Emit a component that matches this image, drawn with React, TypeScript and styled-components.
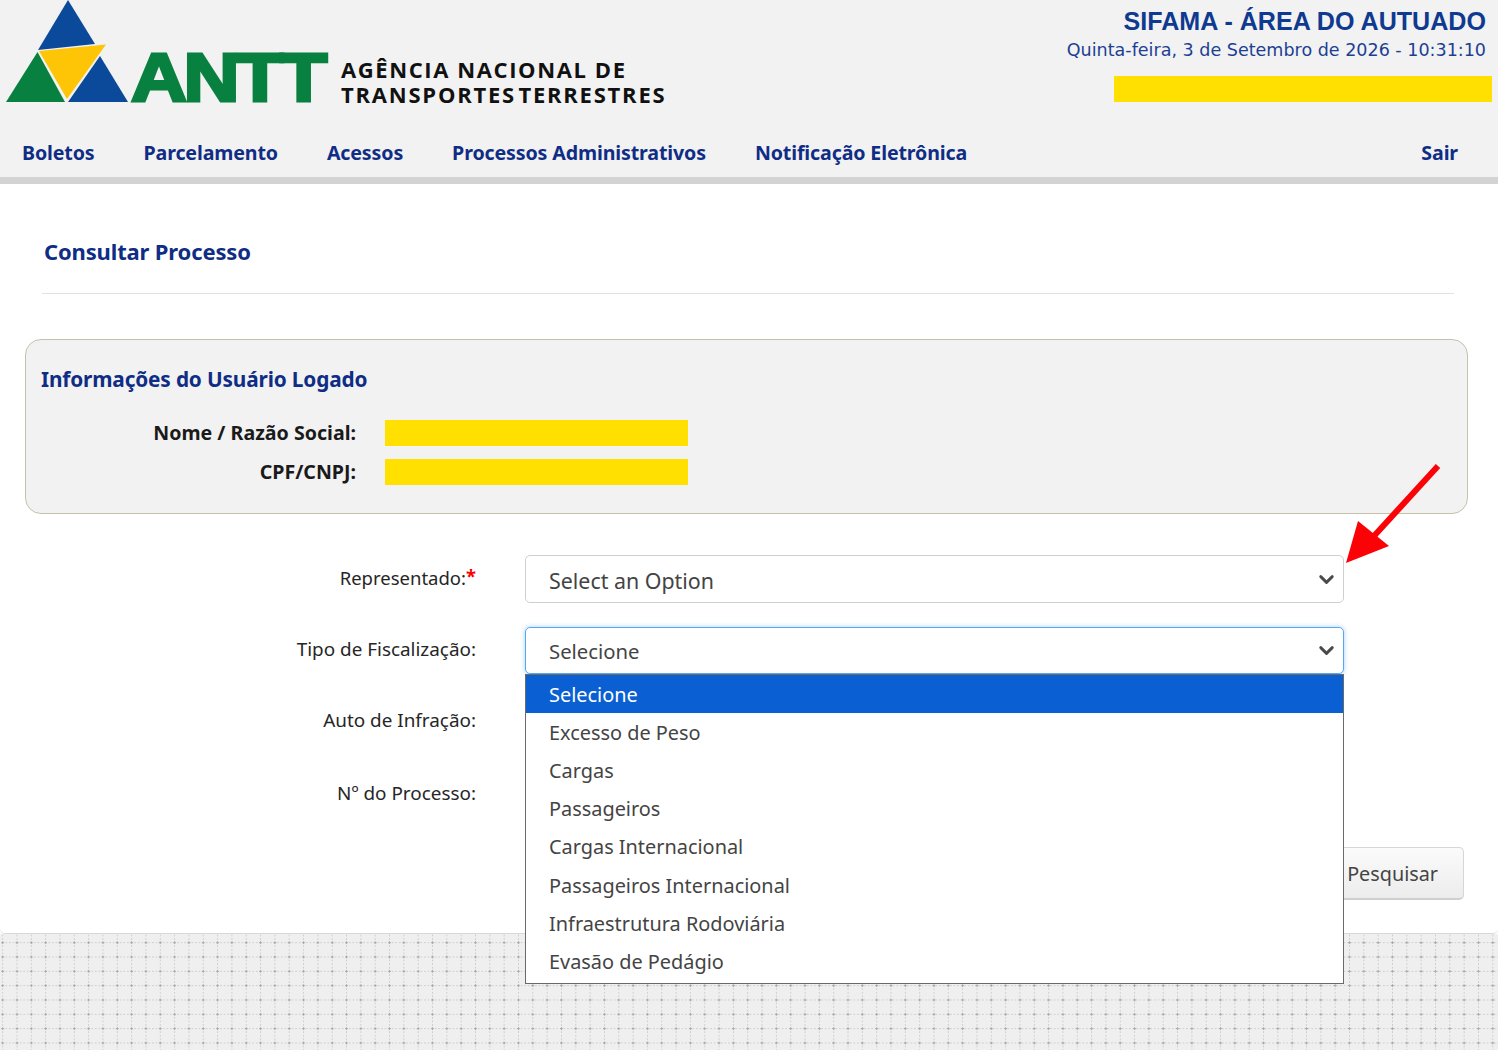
import React from "react";
import styled, { createGlobalStyle } from "styled-components";
import { ChevronDown } from "lucide-react";

const navItems = ["Boletos", "Parcelamento", "Acessos", "Processos Administrativos", "Notificação Eletrônica"];
const options = [
  "Selecione",
  "Excesso de Peso",
  "Cargas",
  "Passageiros",
  "Cargas Internacional",
  "Passageiros Internacional",
  "Infraestrutura Rodoviária",
  "Evasão de Pedágio",
];

const App = () => {
  return (
    <Page>
      <GlobalStyle />
      <Header>
        <TopRow>
          <Brand>
            <Logo />
            <BrandName>
              <BrandLine>AGÊNCIA NACIONAL DE</BrandLine>
              <BrandLine $tight>TRANSPORTES TERRESTRES</BrandLine>
            </BrandName>
          </Brand>
          <SystemInfo>
            <SystemTitle>SIFAMA - ÁREA DO AUTUADO</SystemTitle>
            <SystemDate>Quinta-feira, 3 de Setembro de 2026 - 10:31:10</SystemDate>
            <UserMask />
          </SystemInfo>
        </TopRow>
        <Nav>
          <NavList>
            {navItems.map((item) => (
              <NavLink key={item}>{item}</NavLink>
            ))}
          </NavList>
          <NavLink>Sair</NavLink>
        </Nav>
      </Header>
      <HeaderBar />

      <Content>
        <PageTitle>Consultar Processo</PageTitle>
        <Divider />

        <UserCard>
          <CardTitle>Informações do Usuário Logado</CardTitle>
          <InfoRow>
            <InfoLabel>Nome / Razão Social:</InfoLabel>
            <InfoMask />
          </InfoRow>
          <InfoRow>
            <InfoLabel>CPF/CNPJ:</InfoLabel>
            <InfoMask />
          </InfoRow>
          <Arrow />
        </UserCard>

        <Form>
          <FormRow>
            <FieldLabel $offset={-2} $size={18.5}>
              Representado:<Required>*</Required>
            </FieldLabel>
            <SelectBox>
              <SelectText>Select an Option</SelectText>
              <Chevron size={23} strokeWidth={3} />
            </SelectBox>
          </FormRow>
          <FormRow>
            <FieldLabel $offset={-2}>Tipo de Fiscalização:</FieldLabel>
            <SelectWrap>
              <SelectBox $open>
                <OpenText>Selecione</OpenText>
                <Chevron size={23} strokeWidth={3} />
              </SelectBox>
              <OptionList>
                {options.map((option, i) => (
                  <Option key={option} $active={i === 0}>
                    {option}
                  </Option>
                ))}
              </OptionList>
            </SelectWrap>
          </FormRow>
          <FormRow>
            <FieldLabel $offset={-3}>Auto de Infração:</FieldLabel>
            <HiddenInput />
          </FormRow>
          <FormRow>
            <FieldLabel $offset={-2}>Nº do Processo:</FieldLabel>
            <HiddenInput />
          </FormRow>
          <Actions>
            <SearchButton>Pesquisar</SearchButton>
          </Actions>
        </Form>
      </Content>

      <Footer />
    </Page>
  );
};

const Logo = () => (
  <svg width="335" height="118" viewBox="0 0 335 118" style={{ display: "block", flexShrink: 0 }}>
    <polygon points="68,0 95,44 38,50" fill="#0b4a9b" />
    <polygon points="37.5,52 65,102 6,102" fill="#08803f" />
    <polygon points="100,56 128,102 68,102" fill="#0b4a9b" />
    <polygon points="39,51 106,44.5 67,99" fill="#fdc506" />
    <text
      x="131"
      y="101"
      fontFamily="'Liberation Sans', sans-serif"
      fontWeight="700"
      fontSize="68"
      letterSpacing="-3"
      fill="#08803f"
      stroke="#08803f"
      strokeWidth="3"
      textLength="193"
      lengthAdjust="spacingAndGlyphs"
    >
      ANTT
    </text>
  </svg>
);

const GlobalStyle = createGlobalStyle`
  html, body {
    margin: 0;
    padding: 0;
    background: #fff;
  }
  * {
    box-sizing: border-box;
  }
`;

const Page = styled.div`
  width: 1498px;
  height: 1050px;
  overflow: hidden;
  display: flex;
  flex-direction: column;
  font-family: "Noto Sans", "Open Sans", sans-serif;
`;

const Header = styled.header`
  height: 177px;
  background: #f2f2f2;
  display: flex;
  flex-direction: column;
`;

const TopRow = styled.div`
  height: 128px;
  display: flex;
  justify-content: space-between;
`;

const Brand = styled.div`
  display: flex;
  align-items: flex-start;
`;

const BrandName = styled.div`
  display: flex;
  flex-direction: column;
  margin: 57px 0 0 6px;
  font-family: "Open Sans", sans-serif;
  font-size: 22px;
  line-height: 25px;
  font-weight: 700;
  white-space: nowrap;
  color: #111;
`;

const BrandLine = styled.span<{ $tight?: boolean }>`
  letter-spacing: ${(p) => (p.$tight ? "1.77px" : "1.6px")};
  word-spacing: ${(p) => (p.$tight ? "-5px" : "0")};
`;

const SystemInfo = styled.div`
  display: flex;
  flex-direction: column;
  align-items: flex-end;
  padding: 5px 6px 0 0;
`;

const SystemTitle = styled.div`
  font-family: "Liberation Sans", Arial, sans-serif;
  font-size: 25.1px;
  line-height: 33px;
  font-weight: 700;
  color: #0f3a90;
  margin-right: 6px;
`;

const SystemDate = styled.div`
  font-family: "DejaVu Sans", Verdana, sans-serif;
  font-size: 17.55px;
  line-height: 24px;
  color: #1d3f93;
  margin-right: 6px;
`;

const UserMask = styled.div`
  width: 378px;
  height: 26px;
  margin-top: 14px;
  background: #ffe000;
`;

const Nav = styled.nav`
  display: flex;
  align-items: center;
  justify-content: space-between;
  padding: 0 40px 0 22px;
  height: 49px;
`;

const NavList = styled.div`
  display: flex;
  gap: 49px;
`;

const NavLink = styled.a`
  font-size: 19.6px;
  font-weight: 700;
  letter-spacing: -0.13px;
  color: #0f2d85;
  white-space: nowrap;
`;

const HeaderBar = styled.div`
  height: 7px;
  flex-shrink: 0;
  background: #d3d3d3;
`;

const Content = styled.main`
  height: 750px;
  flex-shrink: 0;
  background: #fff;
  border-bottom: 1px solid #d8d8d8;
  border-radius: 0 0 5px 5px;
  padding: 0 30px 0 25px;
`;

const PageTitle = styled.h1`
  margin: 0;
  padding: 51px 0 0 19px;
  font-size: 22px;
  line-height: 32px;
  font-weight: 700;
  letter-spacing: -0.15px;
  color: #0f2d85;
`;

const Divider = styled.hr`
  margin: 26px 14px 0 17px;
  border: 0;
  border-top: 1px solid #e2e2e2;
`;

const UserCard = styled.section`
  position: relative;
  height: 175px;
  margin: 45px 0 0;
  width: 1443px;
  padding: 24px 15px 0;
  background: #f2f2f2;
  border: 1.5px solid #c6c2aa;
  border-radius: 16px;
`;

const CardTitle = styled.h2`
  margin: 0 0 25px;
  font-size: 20.8px;
  line-height: 30px;
  font-weight: 700;
  letter-spacing: -0.15px;
  color: #0f2d85;
`;

const InfoRow = styled.div`
  display: flex;
  align-items: center;
  height: 27px;
  margin-bottom: 12px;
`;

const InfoLabel = styled.div`
  width: 315px;
  text-align: right;
  font-size: 19.6px;
  font-weight: 700;
  color: #1a1a1a;
  white-space: nowrap;
`;

const InfoMask = styled.div`
  width: 303px;
  height: 26px;
  margin-left: 29px;
  background: #ffe000;
`;

const Arrow = () => (
  <ArrowMark width="100" height="105" viewBox="0 0 100 105">
    <line x1="94" y1="2" x2="30" y2="72" stroke="#fb0207" strokeWidth="6" />
    <polygon points="2,99 14,57 45,82" fill="#fb0207" />
  </ArrowMark>
);

const ArrowMark = styled.svg`
  position: absolute;
  left: 1318px;
  top: 124px;
`;

const Form = styled.div`
  margin-top: 41px;
  display: flex;
  flex-direction: column;
`;

const FormRow = styled.div`
  display: flex;
  align-items: flex-start;
  height: 72px;
`;

const FieldLabel = styled.label<{ $offset: number; $size?: number }>`
  width: 451px;
  height: 48px;
  display: flex;
  align-items: center;
  justify-content: flex-end;
  flex-shrink: 0;
  margin: ${(p) => p.$offset}px 49px 0 0;
  font-size: ${(p) => p.$size ?? 18.9}px;
  color: #262626;
  white-space: nowrap;
`;

const Required = styled.span`
  color: #f00;
  font-weight: 700;
  margin-top: -4px;
`;

const SelectWrap = styled.div`
  position: relative;
  width: 819px;
  height: 48px;
`;

const SelectBox = styled.div<{ $open?: boolean }>`
  width: 819px;
  height: ${(p) => (p.$open ? "47px" : "48px")};
  display: flex;
  align-items: center;
  justify-content: space-between;
  padding: 0 5px 0 23px;
  color: #444;
  background: #fff;
  border: 1.5px solid ${(p) => (p.$open ? "#5aa7ee" : "#cfcfcf")};
  border-radius: 5px;
  box-shadow: ${(p) => (p.$open ? "0 0 5px rgba(90, 167, 238, 0.55)" : "none")};
`;

const SelectText = styled.span`
  font-size: 21.4px;
  padding-top: 2px;
`;

const OpenText = styled.span`
  font-size: 20.3px;
`;

const Chevron = styled(ChevronDown)`
  color: #4a4a4a;
`;

const OptionList = styled.ul`
  position: absolute;
  z-index: 2;
  left: 0;
  top: 47px;
  width: 819px;
  height: 310px;
  margin: 0;
  padding: 0;
  list-style: none;
  background: #fff;
  border: 1.5px solid #6a6a6a;
  border-top: 1px solid #6a6a6a;
`;

const Option = styled.li<{ $active?: boolean }>`
  height: 38.2px;
  display: flex;
  align-items: center;
  padding: 0 0 0 23px;
  font-size: 19.9px;
  color: ${(p) => (p.$active ? "#fff" : "#444")};
  background: ${(p) => (p.$active ? "#0a5fd2" : "transparent")};
`;

const HiddenInput = styled.div`
  width: 819px;
  height: 48px;
`;

const Actions = styled.div`
  display: flex;
  justify-content: flex-end;
  width: 1439px;
  margin-top: 4px;
`;

const SearchButton = styled.button`
  width: 180px;
  height: 53px;
  padding: 0 25px 0 0;
  text-align: right;
  font-family: inherit;
  font-size: 19.8px;
  color: #444;
  background: linear-gradient(#fbfbfb, #ececec);
  border: 1px solid #d6d6d6;
  border-bottom: 2px solid #cfcfcf;
  border-radius: 5px;
`;

const Footer = styled.footer`
  flex: 1;
  background-color: #efefef;
  background-image:
    radial-gradient(circle at center, #a8a8a8 0.9px, transparent 1.4px),
    radial-gradient(circle at center, #cdcdcd 0.6px, transparent 1px),
    radial-gradient(circle at center, #cdcdcd 0.6px, transparent 1px);
  background-size: 14.33px 14.33px, 3.58px 14.33px, 14.33px 3.58px;
  background-position: -4.5px 1.5px, 0.9px 1.5px, -4.5px 6.9px;
`;

export default App;
